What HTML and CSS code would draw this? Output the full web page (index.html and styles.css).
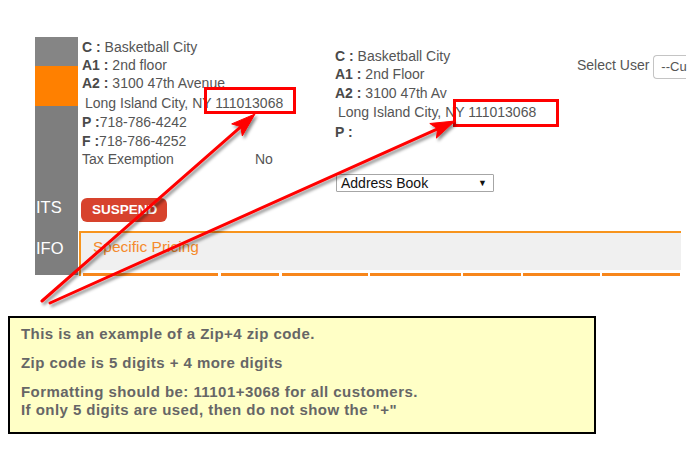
FILE: index.html
```html
<!DOCTYPE html>
<html>
<head>
<meta charset="utf-8">
<link rel="stylesheet" href="styles.css">
</head>
<body>
<div class="page">
  <div class="main">
    <div class="sidebar">
      <div class="sb-top"></div>
      <div class="sb-active"></div>
      <div class="sb-rest">
        <div class="sb-item">ITS</div>
        <div class="sb-item sb-item2">IFO</div>
      </div>
    </div>
    <div class="content">
      <div class="top">
        <div class="info info-left">
          <div class="line"><b>C :</b> Basketball City</div>
          <div class="line"><b>A1 :</b> 2nd floor</div>
          <div class="line"><b>A2 :</b> 3100 47th Avenue</div>
          <div class="line city">Long Island City, NY 111013068</div>
          <div class="line"><b>P :</b>718-786-4242</div>
          <div class="line"><b>F :</b>718-786-4252</div>
          <div class="line tax"><span class="tax-label">Tax Exemption</span><span>No</span></div>
        </div>
        <div class="info info-right">
          <div class="line"><b>C :</b> Basketball City</div>
          <div class="line"><b>A1 :</b> 2nd Floor</div>
          <div class="line"><b>A2 :</b> 3100 47th Av</div>
          <div class="line city">Long Island City, NY 111013068</div>
          <div class="line"><b>P :</b></div>
          <div class="fake-select"><span>Address Book</span><span class="caret">▼</span></div>
        </div>
        <div class="select-user">
          <span class="su-label">Select User</span>
          <div class="su-box">--Cu</div>
        </div>
      </div>
      <div class="actions">
        <div class="btn-suspend">SUSPEND</div>
      </div>
      <div class="pricing">
        <div class="pricing-head">Specific Pricing</div>
        <div class="tabs">
          <div class="tab w1"></div>
          <div class="tab w2"></div>
          <div class="tab w3"></div>
          <div class="tab w4"></div>
          <div class="tab w5"></div>
          <div class="tab w6"></div>
          <div class="tab w7"></div>
        </div>
      </div>
    </div>
  </div>
  <div class="note">
    <p>This is an example of a Zip+4 zip code.</p>
    <p>Zip code is 5 digits + 4 more digits</p>
    <p>Formatting should be: 11101+3068 for all customers.<br>If only 5 digits are used, then do not show the "+"</p>
  </div>
  <svg class="overlay" width="687" height="457" viewBox="0 0 687 457">
    <defs>
      <filter id="sh" x="-20%" y="-20%" width="140%" height="140%">
        <feDropShadow dx="2" dy="2.5" stdDeviation="1.5" flood-color="#000" flood-opacity="0.45"/>
      </filter>
    </defs>
    <rect x="205.5" y="88.5" width="89" height="24" fill="none" stroke="#ff0000" stroke-width="3"/>
    <rect x="454.5" y="100.5" width="103" height="25" fill="none" stroke="#ff0000" stroke-width="3"/>
    <g filter="url(#sh)" fill="#ff0000" stroke="#ff0000">
      <line x1="42" y1="301" x2="241" y2="126.6" stroke-width="3" stroke-linecap="round"/>
      <polygon points="255,114 242.3,135.9 240.75,126.6 231.7,123.9" stroke-width="1" stroke-linejoin="round"/>
      <line x1="50" y1="303" x2="437.6" y2="128.8" stroke-width="3" stroke-linecap="round"/>
      <polygon points="455,121 436.4,138.1 437.65,128.75 429.8,123.5" stroke-width="1" stroke-linejoin="round"/>
    </g>
  </svg>
</div>
</body>
</html>
```
FILE: styles.css
```css
* { box-sizing: border-box; }
body {
  margin: 0;
  font-family: "Liberation Sans", Arial, sans-serif;
  background: #fff;
}
.page {
  position: relative;
  width: 687px;
  height: 457px;
  overflow: hidden;
}
.main {
  display: flex;
  padding-top: 37px;
  padding-left: 35px;
  height: 276px;
}
.sidebar {
  width: 43px;
  height: 238px;
  display: flex;
  flex-direction: column;
  flex-shrink: 0;
  overflow: hidden;
}
.sb-top { height: 29px; background: #858585; }
.sb-active { height: 40px; background: #ff8000; }
.sb-rest {
  flex: 1;
  background: #7e7e7e;
  padding-top: 91px;
  color: #fff;
  font-size: 16.5px;
  line-height: 20px;
}
.sb-item { padding-left: 1px; }
.sb-item2 { margin-top: 21px; }

.content {
  flex: 1;
  min-width: 0;
}
.top {
  display: flex;
  height: 161px;
}
.info {
  flex-shrink: 0;
  font-size: 14px;
  line-height: 18.3px;
  color: #555;
  white-space: nowrap;
}
.info b { color: #4a4a4a; }
.info-left {
  width: 257px;
  padding-left: 4px;
  padding-top: 0.5px;
}
.info-right {
  width: 242px;
  padding-top: 10px;
}
.city {
  padding: 1.2px 0 1.6px 3px;
}
.tax { display: flex; }
.tax-label { width: 173px; }
.fake-select {
  margin-top: 33px;
  margin-left: 1px;
  width: 158px;
  height: 18px;
  border: 1px solid #a6a6a6;
  border-radius: 1px;
  display: flex;
  justify-content: space-between;
  align-items: center;
  padding: 0 6px 0 4px;
  color: #111;
  font-size: 14px;
  line-height: 16px;
}
.caret { font-size: 9px; color: #111; }

.select-user {
  flex-shrink: 0;
  display: flex;
  align-items: flex-start;
  padding-top: 18px;
  gap: 4px;
  white-space: nowrap;
}
.su-label {
  font-size: 14px;
  color: #555;
  line-height: 20px;
}
.su-box {
  height: 24px;
  border: 1px solid #c4c4c4;
  border-right: none;
  border-radius: 4px 0 0 4px;
  padding: 0 0 0 7px;
  font-size: 13px;
  line-height: 22px;
  color: #555;
  width: 33px;
  white-space: nowrap;
}

.actions {
  height: 24px;
  margin-bottom: 9px;
  padding-left: 3px;
}
.btn-suspend {
  display: inline-block;
  width: 86px;
  height: 24px;
  background: #d7432d;
  border-radius: 6px;
  color: #fff;
  font-weight: bold;
  font-size: 13.5px;
  line-height: 24px;
  padding-left: 11px;
}
.pricing {
  margin-left: 1px;
  width: 602px;
  border-top: 2px solid #f7941d;
  border-left: 2px solid #f7941d;
}
.pricing-head {
  height: 37px;
  background: #f0f0f0;
  color: #f58a2c;
  font-size: 15.5px;
  line-height: 28px;
  padding-left: 12px;
}
.tabs {
  display: flex;
  gap: 2px;
  padding: 3px 0 0 2px;
  height: 6px;
}
.tab { height: 3px; background: #f7861b; }
.w1 { width: 135px; }
.w2 { width: 58px; margin-left: 1px; }
.w3 { width: 86px; margin-left: 1px; }
.w4 { width: 91px; }
.w5 { width: 58px; }
.w6 { width: 77px; }
.w7 { width: 78px; }

.note {
  margin: 40px 0 0 8px;
  width: 588px;
  height: 118px;
  border: 2px solid #000;
  background: #ffffc6;
  padding: 7px 0 0 11px;
  color: #666;
  font-weight: bold;
  font-size: 15px;
  letter-spacing: 0.45px;
  line-height: 18px;
}
.note p { margin: 0 0 11px 0; }

.overlay {
  position: absolute;
  left: 0;
  top: 0;
  pointer-events: none;
}
```
